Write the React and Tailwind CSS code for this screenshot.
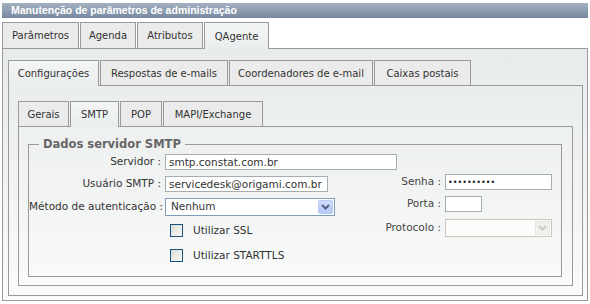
import React from "react";

const font = { fontFamily: '"DejaVu Sans", Verdana, sans-serif' };

function Tab({ label, w, active, h }) {
  if (active) {
    return (
      <div
        className={`relative z-10 -mb-px flex shrink-0 items-center justify-center whitespace-nowrap border border-b-0 border-[#9a9a9a] bg-gradient-to-b from-[#f4f6f6] to-[#eaeded] text-[10px] text-[#333] ${w} ${h}`}
      >
        {label}
      </div>
    );
  }
  return (
    <div
      className={`flex shrink-0 items-center justify-center whitespace-nowrap border border-b-0 border-[#9a9a9a] bg-[#ebebeb] text-[10px] text-[#333] ${w} ${h}`}
    >
      {label}
    </div>
  );
}

function Chevron({ color }) {
  return (
    <svg width="9" height="6" viewBox="0 0 9 6">
      <path d="M1 1 L4.5 4.5 L8 1" fill="none" stroke={color} strokeWidth="2" />
    </svg>
  );
}

function Checkbox({ label }) {
  return (
    <div className="flex h-[13px] items-center">
      <div className="h-[13px] w-[13px] shrink-0 border border-[#1c5180] bg-gradient-to-br from-[#dcdcd6] to-[#fafaf8]" />
      <span className="ml-[10px] whitespace-nowrap text-[10.5px] text-[#333]">{label}</span>
    </div>
  );
}

const label = "w-[132px] shrink-0 whitespace-nowrap text-right text-[10.5px] text-[#333]";
const labelR = "w-[72px] shrink-0 whitespace-nowrap text-right text-[10.5px] text-[#444]";

export default function App() {
  return (
    <div className="flex h-[304px] w-[590px] flex-col overflow-hidden bg-white pb-[3px]" style={font}>
      {/* title bar */}
      <div
        className="mx-[2px] mt-[3px] flex h-[15px] shrink-0 items-center bg-gradient-to-b from-[#a3b1c0] to-[#7888a0] pl-[9px] text-[10.5px] font-bold leading-none text-white"
        style={{ fontFamily: '"Liberation Sans", Arial, sans-serif' }}
      >
        Manutenção de parâmetros de administração
      </div>

      {/* main tabs */}
      <div className="ml-[2px] mt-[4px] flex shrink-0 gap-px">
        <Tab label="Parâmetros" w="w-[77px]" h="h-[26px]" />
        <Tab label="Agenda" w="w-[56px]" h="h-[26px]" />
        <Tab label="Atributos" w="w-[66px]" h="h-[26px]" />
        <Tab label="QAgente" w="w-[65px]" h="h-[27px]" active />
      </div>

      <div className="mx-[2px] flex flex-1 flex-col border border-[#9a9a9a] bg-gradient-to-b from-[#e8ebeb] to-[#fafbfb] pb-[4px] pl-[5px] pr-[4px] pt-[11px]">
        {/* second level tabs */}
        <div className="flex shrink-0 gap-px">
          <Tab label="Configurações" w="w-[91px]" h="h-[26px]" active />
          <Tab label="Respostas de e-mails" w="w-[128px]" h="h-[25px]" />
          <Tab label="Coordenadores de e-mail" w="w-[144px]" h="h-[25px]" />
          <Tab label="Caixas postais" w="w-[97px]" h="h-[25px]" />
        </div>

        <div className="flex flex-1 flex-col border border-[#9a9a9a] pb-[9px] pl-[9px] pr-[9px] pt-[15px]">
          {/* third level tabs */}
          <div className="flex shrink-0 gap-px">
            <Tab label="Gerais" w="w-[51px]" h="h-[25px]" />
            <Tab label="SMTP" w="w-[49px]" h="h-[26px]" active />
            <Tab label="POP" w="w-[42px]" h="h-[25px]" />
            <Tab label="MAPI/Exchange" w="w-[100px]" h="h-[25px]" />
          </div>

          <div className="flex flex-1 flex-col border border-[#9a9a9a] pb-[8px] pl-[9px] pr-[10px] pt-[9px]">
            <fieldset className="flex-1 border border-[#9a9a9a]">
              <legend className="ml-[10px] px-[4px] text-[11.5px] font-bold leading-[16px] text-[#666]">
                Dados servidor SMTP
              </legend>

              <div className="flex">
                {/* left column */}
                <div className="flex w-[340px] shrink-0 flex-col pt-[2px]">
                  <div className="flex h-[16px] items-center">
                    <span className={label}>Servidor :</span>
                    <input
                      readOnly
                      defaultValue="smtp.constat.com.br"
                      className="ml-[4px] h-[16px] w-[232px] shrink-0 border border-[#a5acb2] bg-white px-[3px] text-[10.5px] text-[#333] outline-none"
                    />
                  </div>
                  <div className="mt-[6px] flex h-[16px] items-center">
                    <span className={label}>Usuário SMTP :</span>
                    <input
                      readOnly
                      defaultValue="servicedesk@origami.com.br"
                      className="ml-[4px] h-[16px] w-[163px] shrink-0 border border-[#a5acb2] bg-white px-[3px] text-[10.5px] text-[#333] outline-none"
                    />
                  </div>
                  <div className="mt-[6px] flex h-[18px] items-center">
                    <span className={label}>Método de autenticação :</span>
                    <div className="ml-[4px] flex h-[18px] w-[170px] shrink-0 items-center justify-between border border-[#7f9db9] bg-white pl-[5px] pr-px">
                      <span className="text-[10.5px] text-[#333]">Nenhum</span>
                      <div className="flex h-[14px] w-[15px] items-center justify-center rounded-[2px] border border-[#b9c9ef] bg-gradient-to-b from-[#d0dcfc] to-[#b6c8f6]">
                        <Chevron color="#4d6185" />
                      </div>
                    </div>
                  </div>
                  <div className="ml-[141px] mt-[8px]">
                    <Checkbox label="Utilizar SSL" />
                  </div>
                  <div className="ml-[141px] mt-[12px]">
                    <Checkbox label="Utilizar STARTTLS" />
                  </div>
                </div>

                {/* right column */}
                <div className="flex flex-col pt-[22px]">
                  <div className="flex h-[16px] items-center">
                    <span className={labelR}>Senha :</span>
                    <input
                      readOnly
                      type="password"
                      defaultValue="1234567890"
                      className="ml-[4px] h-[16px] w-[107px] shrink-0 border border-[#a5acb2] bg-white px-[2px] text-[8px] text-[#222] outline-none"
                    />
                  </div>
                  <div className="mt-[6px] flex h-[16px] items-center">
                    <span className={labelR}>Porta :</span>
                    <input
                      readOnly
                      defaultValue=""
                      className="ml-[4px] h-[16px] w-[37px] shrink-0 border border-[#a5acb2] bg-white outline-none"
                    />
                  </div>
                  <div className="mt-[7px] flex h-[18px] items-center">
                    <span className={labelR}>Protocolo :</span>
                    <div className="ml-[4px] flex h-[18px] w-[107px] shrink-0 items-center justify-end border border-[#c9c7ba] bg-[#fcfcfa] pr-px">
                      <div className="flex h-[14px] w-[15px] items-center justify-center border border-[#e6e6e2] bg-[#f0f0ec]">
                        <Chevron color="#c8c8c8" />
                      </div>
                    </div>
                  </div>
                </div>
              </div>
            </fieldset>
          </div>
        </div>
      </div>
    </div>
  );
}
